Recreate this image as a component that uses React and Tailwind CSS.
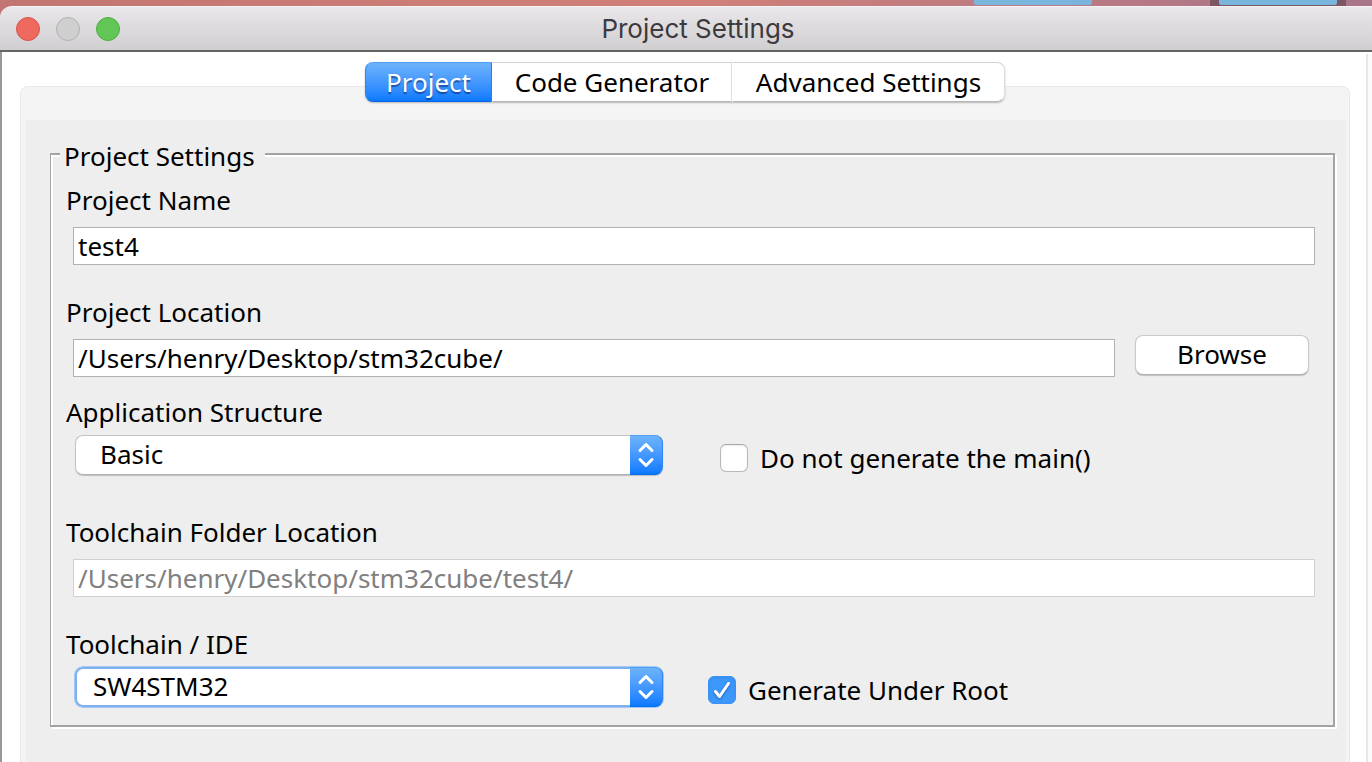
import { useState } from "react";

function Desktop() {
  return (
    <div className="flex h-[6px] w-full bg-linear-to-r from-[#c27672] via-[#d08078] to-[#a8748a]">
      <div className="w-[71%]" />
      <div className="h-[5px] w-[118px] rounded-b-xs bg-[#79b5dc]" />
      <div className="flex-1" />
      <div className="h-[6px] w-[136px] bg-[#7d5663] px-[9px]">
        <div className="h-[5px] rounded-b-xs bg-[#79b5dc]" />
      </div>
      <div className="w-[26px]" />
    </div>
  );
}

function TitleBar() {
  return (
    <header className="grid h-[46px] grid-cols-[1fr_auto_1fr] items-center rounded-tl-xl border-t border-b-2 border-t-[#f6f4f6] border-b-[#666466] bg-linear-to-b from-[#eae7ea] to-[#d1ced1] pl-4">
      <div className="flex gap-4">
        <button type="button" aria-label="Close" className="size-6 rounded-full border border-[#d9534b] bg-[#ee6a5f]" />
        <button type="button" aria-label="Minimize" className="size-6 rounded-full border border-[#b1b0b1] bg-[#d0cfd0]" />
        <button type="button" aria-label="Zoom" className="size-6 rounded-full border border-[#50ad42] bg-[#62c656]" />
      </div>
      <h1 className="pl-2 font-['Inter',sans-serif] text-[26px] leading-8 text-[#3c3a3c]">Project Settings</h1>
    </header>
  );
}

const tabs = [
  { name: "Project", width: "w-[127px]" },
  { name: "Code Generator", width: "w-[240px]" },
  { name: "Advanced Settings", width: "w-[273px]" },
];

function Tabs() {
  const [active, setActive] = useState("Project");
  return (
    <div role="tablist" className="relative z-10 flex h-10 rounded-lg shadow-[0_1px_2px_rgba(0,0,0,0.25)]">
      {tabs.map(({ name, width }) => (
        <button
          key={name}
          type="button"
          role="tab"
          aria-selected={name === active}
          onClick={() => setActive(name)}
          className={`${width} border first:rounded-l-lg last:rounded-r-lg ${
            name === active
              ? "border-t-[#4f9ff5] border-r-[#1f80f8] border-b-[#0a62e8] border-l-[#2f86f0] bg-linear-to-b from-[#6db3fb] to-[#067aff] text-white text-shadow-[0_2px_1px_rgba(0,40,110,0.6)]"
              : "border-t-[#d4d4d4] border-r-[#dedede] border-b-[#b4b4b4] border-l-white bg-white"
          }`}
        >
          {name}
        </button>
      ))}
    </div>
  );
}

function Select({ id, options, focused, inset }) {
  return (
    <div className={`relative ml-[9px] h-10 w-[588px] rounded-lg ${focused ? "ring-1 ring-[#a3c8f3]" : "shadow-[0_1px_1px_rgba(0,0,0,0.2)]"}`}>
      <select
        id={id}
        className={`block h-10 w-full appearance-none rounded-lg bg-white pr-10 pb-[2px] outline-none ${inset} ${
          focused ? "border-2 border-[#7db1ee]" : "border border-[#c4c4c4] border-b-[#b0b0b0]"
        }`}
      >
        {options.map((o) => (
          <option key={o}>{o}</option>
        ))}
      </select>
      <span className="pointer-events-none absolute inset-y-0 right-0 flex w-[33px] items-center justify-center rounded-r-lg border border-t-[#4f9ff5] border-r-[#2f86f0] border-b-[#0a6cf0] border-l-0 bg-linear-to-b from-[#6db3fb] to-[#067aff]">
        <svg width="18" height="28" viewBox="0 0 18 28" fill="none" stroke="white" strokeWidth="3" strokeLinecap="round" strokeLinejoin="round">
          <path d="M3 9.500 9 3.500l6 6" />
          <path d="M3 18.500 9 24.500l6-6" />
        </svg>
      </span>
    </div>
  );
}

function Checkbox({ label, defaultChecked, className }) {
  return (
    <label className={`flex h-8 items-center gap-3 ${className}`}>
      <span className="relative size-7">
        <input
          type="checkbox"
          defaultChecked={defaultChecked}
          className="peer block size-7 appearance-none rounded-md border border-[#b9b9b9] border-t-[#a6a6a6] bg-white shadow-[inset_0_1px_2px_rgba(0,0,0,0.08)] checked:border-[#3a92f5] checked:bg-[#3c97fb]"
        />
        <svg
          className="pointer-events-none absolute inset-0 hidden drop-shadow-[0_1px_1px_rgba(0,40,110,0.5)] peer-checked:block"
          width="28"
          height="28"
          viewBox="0 0 28 28"
          fill="none"
          stroke="white"
          strokeWidth="3"
          strokeLinecap="round"
          strokeLinejoin="round"
        >
          <path d="M7.500 15.500 11.500 20.500 20.500 7.500" />
        </svg>
      </span>
      {label}
    </label>
  );
}

const inputStyle =
  "h-[38px] min-w-0 flex-1 border border-[#b2b2b2] bg-white px-1 outline-none disabled:border-[#d0d0d0] disabled:text-[#808080]";

function Settings() {
  return (
    <fieldset className="min-w-0 border-2 border-[#a3a3a3] shadow-[inset_2px_2px_0_white,2px_2px_0_white] [border-left-width:1px]">
      <legend className="ml-[9px] bg-[#eee] pt-1 pr-[10px] pl-1 leading-9">Project Settings</legend>
      <div className="flex flex-col pt-[10px] pr-[18px] pb-[18px] pl-[15px] leading-8">
        <label htmlFor="name">Project Name</label>
        <div className="mt-[11px] ml-[7px] flex">
          <input id="name" type="text" defaultValue="test4" className={inputStyle} />
        </div>

        <label htmlFor="location" className="mt-[31px]">
          Project Location
        </label>
        <div className="ml-[7px] flex h-[49px] items-end gap-5 pr-[6px]">
          <input id="location" type="text" defaultValue="/Users/henry/Desktop/stm32cube/" className={inputStyle} />
          <button
            type="button"
            className="mb-[2px] h-10 w-[174px] rounded-lg border border-[#c9c9c9] border-b-[#b0b0b0] bg-white pb-[2px] shadow-[0_1px_1px_rgba(0,0,0,0.2)]"
          >
            Browse
          </button>
        </div>

        <label htmlFor="structure" className="mt-[19px]">
          Application Structure
        </label>
        <div className="mt-[7px] flex">
          <Select id="structure" options={["Basic", "Advanced"]} inset="pl-6" />
          <Checkbox label="Do not generate the main()" className="mt-[7px] ml-[57px]" />
        </div>

        <label htmlFor="folder" className="mt-[41px]">
          Toolchain Folder Location
        </label>
        <div className="mt-[11px] ml-[7px] flex">
          <input id="folder" type="text" disabled defaultValue="/Users/henry/Desktop/stm32cube/test4/" className={inputStyle} />
        </div>

        <label htmlFor="toolchain" className="mt-[31px]">
          Toolchain / IDE
        </label>
        <div className="mt-[7px] flex">
          <Select id="toolchain" options={["SW4STM32", "EWARM", "MDK-ARM"]} focused inset="pl-4" />
          <Checkbox label="Generate Under Root" defaultChecked className="mt-[7px] ml-[45px]" />
        </div>
      </div>
    </fieldset>
  );
}

export default function App() {
  return (
    <div className="flex min-h-screen flex-col bg-[#c27672] font-['Noto_Sans',sans-serif] text-[26px] text-black">
      <Desktop />
      <TitleBar />
      <div className="flex flex-1 border-l-2 border-[#989898] bg-white">
        <main className="flex min-w-0 flex-1 flex-col items-center pt-[10px] pr-4 pl-[18px]">
          <Tabs />
          <div className="-mt-4 flex w-full flex-1 flex-col rounded-t-lg border border-b-0 border-[#e9e9e9] bg-[#f4f4f4] pt-[33px] pr-[3px] pl-[5px]">
            <div className="flex-1 bg-[#eee] pt-[14px] pr-[11px] pb-9 pl-6">
              <Settings />
            </div>
          </div>
        </main>
        <div className="mt-[2px] w-[6px] border-l-2 border-[#e7e7e7] bg-[#fafafa]" />
      </div>
    </div>
  );
}
